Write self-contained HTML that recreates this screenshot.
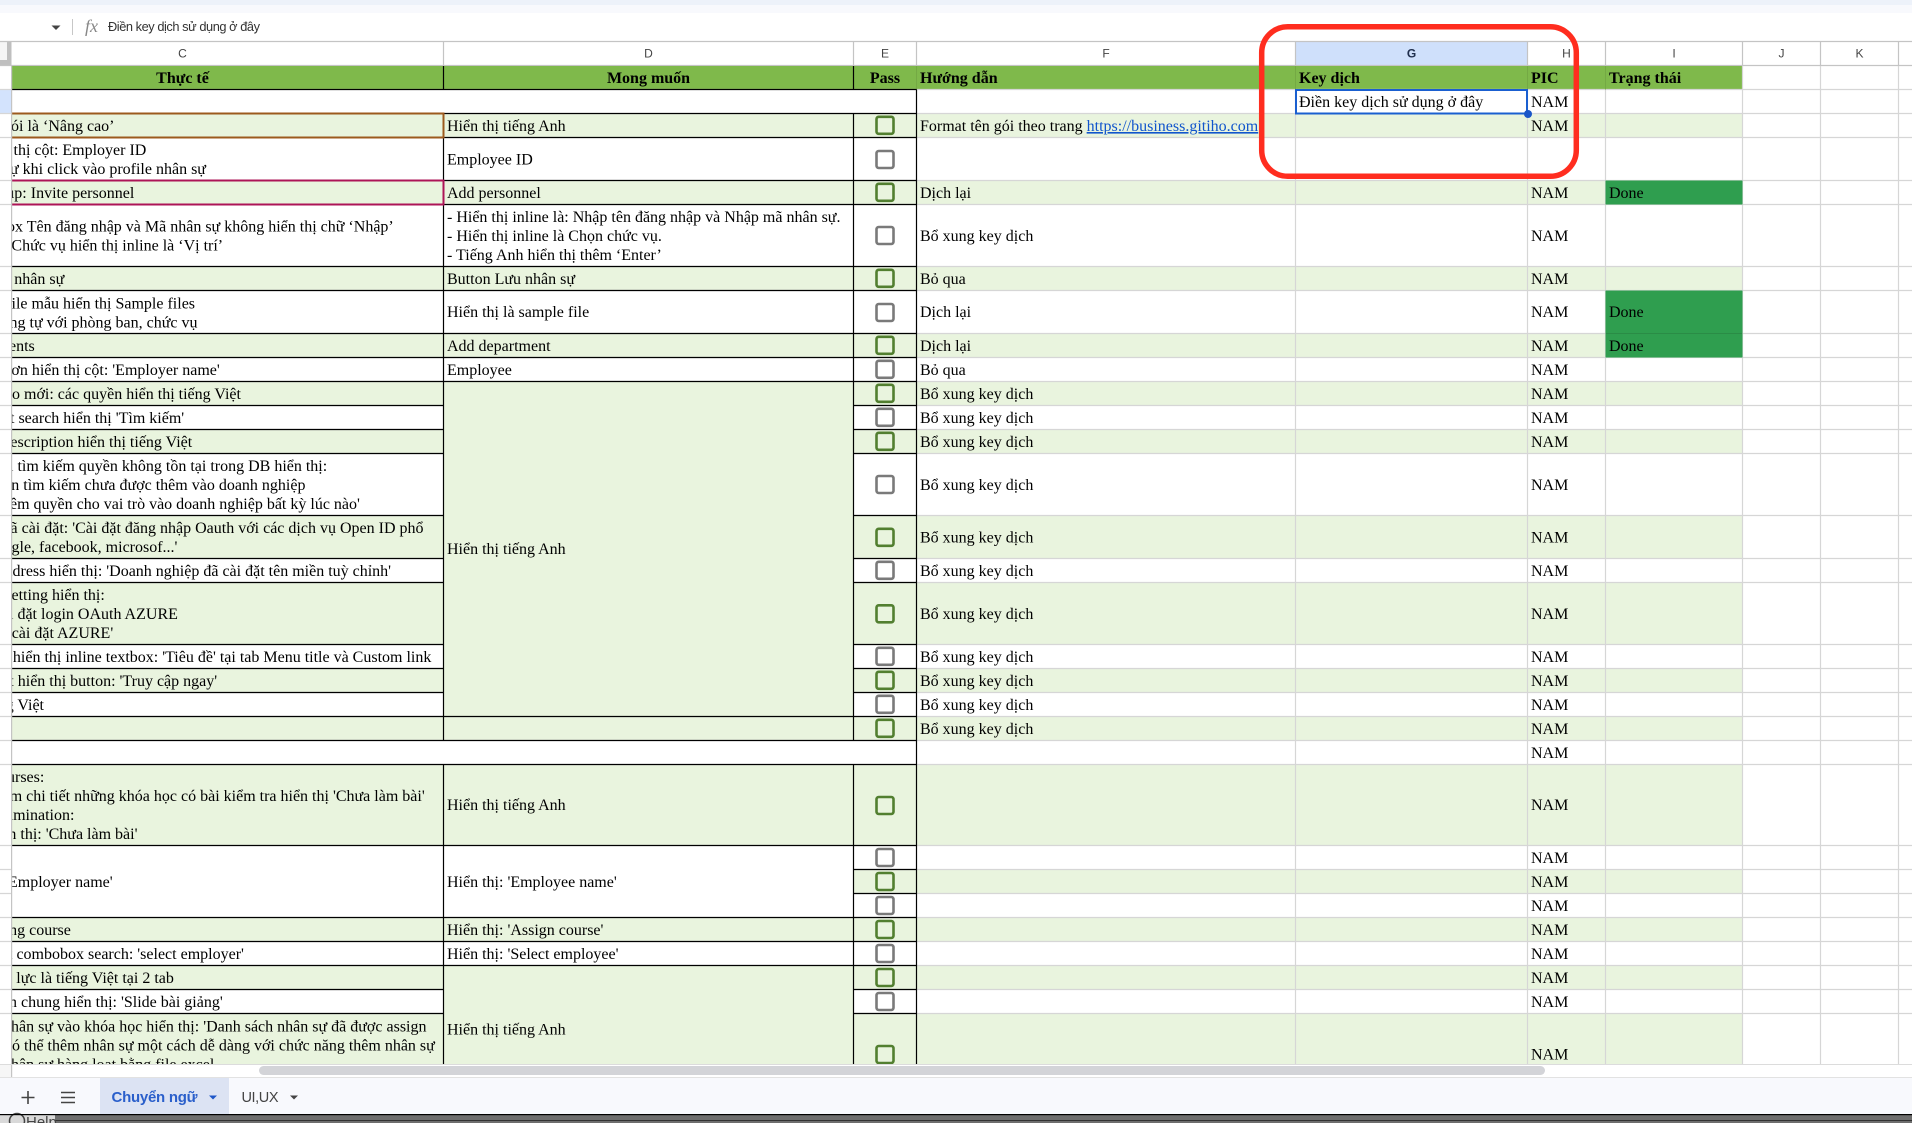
<!DOCTYPE html>
<html lang="vi"><head><meta charset="utf-8"><title>Chuyển ngữ</title>
<style>
html,body{margin:0;padding:0;background:#fff;overflow:hidden}
svg{display:block}
.t text{font-family:"Liberation Serif","DejaVu Serif",serif;font-size:16px;fill:#000}
.b text{font-weight:bold}
.s text,text.s{font-family:"Liberation Sans","DejaVu Sans",sans-serif}
.h text{font-family:"Liberation Sans",sans-serif;font-size:12px;fill:#444;text-anchor:middle}
</style></head><body>
<svg xmlns="http://www.w3.org/2000/svg" width="1912" height="1123" viewBox="0 0 1912 1123">
<defs>
<clipPath id="cC"><rect x="12" y="66" width="431" height="998"/></clipPath>
<clipPath id="cG"><rect x="0" y="66" width="1912" height="998"/></clipPath>
</defs>
<rect width="1912" height="1123" fill="#fff"/>
<rect width="1912" height="5" fill="#edf2fa"/>
<rect y="5" width="1912" height="8" fill="#f8f9fd"/>
<!-- formula bar -->
<path d="M51.5 25.5h9l-4.5 4.5z" fill="#444"/>
<rect x="72" y="19" width="1" height="16" fill="#c7c7c7"/>
<text x="85" y="32" font-family="Liberation Serif,serif" font-style="italic" font-size="18" fill="#888">fx</text>
<text class="s" x="108" y="31" font-size="12.8" fill="#333" textLength="152" lengthAdjust="spacing">Điền key dịch sử dụng ở đây</text>
<!-- column header -->
<rect x="1295.5" y="41.5" width="232" height="24" fill="#cfe0fb"/>
<rect x="0" y="42" width="7" height="18" fill="#f5f5f5"/>
<path d="M7 42h4.5v23H0v-5h7z" fill="#bfbfbf"/>
<path d="M0 41.5H1912M0 65.5H1912M443.5 41.5V65.5M853.5 41.5V65.5M916.5 41.5V65.5M1295.5 41.5V65.5M1527.5 41.5V65.5M1605.5 41.5V65.5M1742.5 41.5V65.5M1820.5 41.5V65.5M1898.5 41.5V65.5" stroke="#c4c4c4" stroke-width="1.2" fill="none"/>
<g class="h">
<text x="182.5" y="57.5">C</text><text x="648.5" y="57.5">D</text><text x="885" y="57.5">E</text><text x="1106" y="57.5">F</text>
<text x="1411.5" y="57.5" font-weight="bold" style="fill:#202f4d">G</text><text x="1566.5" y="57.5">H</text><text x="1674" y="57.5">I</text><text x="1781.5" y="57.5">J</text><text x="1859.5" y="57.5">K</text>
</g>
<!-- left strip highlight -->
<rect x="0" y="90" width="11" height="23.5" fill="#d3e3fd"/>
<!-- bands -->
<g clip-path="url(#cG)">
<rect x="11.5" y="65.5" width="1731" height="24" fill="#7fb94b"/>
<g fill="#e9f4de">
<rect x="11.5" y="113.5" width="1731" height="24"/>
<rect x="11.5" y="180.5" width="1731" height="24"/>
<rect x="11.5" y="266.5" width="1731" height="24"/>
<rect x="11.5" y="333.5" width="1731" height="24"/>
<rect x="11.5" y="381.5" width="1731" height="24"/>
<rect x="11.5" y="429.5" width="1731" height="24"/>
<rect x="11.5" y="515.5" width="1731" height="43"/>
<rect x="11.5" y="582.5" width="1731" height="62"/>
<rect x="11.5" y="668.5" width="1731" height="24"/>
<rect x="11.5" y="716.5" width="1731" height="24"/>
<rect x="11.5" y="764.5" width="1731" height="81"/>
<rect x="853.5" y="869.5" width="889" height="24"/>
<rect x="11.5" y="917.5" width="1731" height="24"/>
<rect x="11.5" y="965.5" width="1731" height="24"/>
<rect x="11.5" y="1013.5" width="1731" height="60"/>
</g>
<!-- light grid -->
<path d="M0 89.5H1912M0 113.5H1912M0 137.5H1912M0 180.5H1912M0 204.5H1912M0 266.5H1912M0 290.5H1912M0 333.5H1912M0 357.5H1912M0 381.5H1912M0 405.5H1912M0 429.5H1912M0 453.5H1912M0 515.5H1912M0 558.5H1912M0 582.5H1912M0 644.5H1912M0 668.5H1912M0 692.5H1912M0 716.5H1912M0 740.5H1912M0 764.5H1912M0 845.5H1912M0 869.5H1912M0 893.5H1912M0 917.5H1912M0 941.5H1912M0 965.5H1912M0 989.5H1912M0 1013.5H1912" stroke="#d6d6d6" stroke-width="1.2" fill="none"/>
<path d="M1295.5 89.5V1064M1527.5 89.5V1064M1605.5 89.5V1064M1742.5 65.5V1064M1820.5 65.5V1064M1898.5 65.5V1064" stroke="#d6d6d6" stroke-width="1.2" fill="none"/>
<path d="M1295.5 65.5V89.5M1527.5 65.5V89.5M1605.5 65.5V89.5" stroke="#74a944" stroke-width="1" fill="none"/>
<path d="M916.5 65.5V89.5" stroke="#74a944" stroke-width="1" fill="none"/>
<!-- merged cells cover the grid -->
<g fill="#e9f4de">
<rect x="443.5" y="381.5" width="410" height="335"/>
<rect x="443.5" y="965.5" width="410" height="110"/>
</g>
<rect x="11.5" y="845.5" width="842" height="72" fill="#fff"/>
<rect x="11.5" y="89.5" width="905" height="24" fill="#fff"/>
<rect x="11.5" y="740.5" width="905" height="24" fill="#fff"/>
<!-- done cells -->
<g fill="#2f9e4f">
<rect x="1605.5" y="180.5" width="137" height="24"/>
<rect x="1605.5" y="290.5" width="137" height="67"/>
</g>
<path d="M1605.5 333.5H1742.5" stroke="#2a8c46" stroke-width="1"/>
<!-- black grid -->
<path d="M11.5 89.5H916.5M11.5 113.5H916.5M11.5 137.5H916.5M11.5 180.5H916.5M11.5 204.5H916.5M11.5 266.5H916.5M11.5 290.5H916.5M11.5 333.5H916.5M11.5 357.5H916.5M11.5 381.5H916.5M11.5 405.5H443.5M853.5 405.5H916.5M11.5 429.5H443.5M853.5 429.5H916.5M11.5 453.5H443.5M853.5 453.5H916.5M11.5 515.5H443.5M853.5 515.5H916.5M11.5 558.5H443.5M853.5 558.5H916.5M11.5 582.5H443.5M853.5 582.5H916.5M11.5 644.5H443.5M853.5 644.5H916.5M11.5 668.5H443.5M853.5 668.5H916.5M11.5 692.5H443.5M853.5 692.5H916.5M11.5 716.5H916.5M11.5 740.5H916.5M11.5 764.5H916.5M11.5 845.5H916.5M853.5 869.5H916.5M853.5 893.5H916.5M11.5 917.5H916.5M11.5 941.5H916.5M11.5 965.5H916.5M11.5 989.5H443.5M853.5 989.5H916.5M11.5 1013.5H443.5M853.5 1013.5H916.5" stroke="#000" stroke-width="1.2" fill="none"/>
<path d="M443.5 65.5V89.5M443.5 113.5V740.5M443.5 764.5V1064M853.5 65.5V89.5M853.5 113.5V740.5M853.5 764.5V1064M916.5 89.5V1064" stroke="#000" stroke-width="1.2" fill="none"/>
<!-- coloured borders -->
<path d="M11.5 113.5H443.5V137.5H11.5" stroke="#9c5a1e" stroke-width="2" fill="none"/>
<path d="M11.5 180.5H443.5V204.5H11.5" stroke="#ad1457" stroke-width="2" fill="none"/>
<!-- checkboxes -->
<g fill="none" stroke-width="2.6">
<g stroke="#527f30">
<rect x="876.5" y="116.8" width="17" height="17" rx="2.2"/>
<rect x="876.5" y="183.8" width="17" height="17" rx="2.2"/>
<rect x="876.5" y="269.8" width="17" height="17" rx="2.2"/>
<rect x="876.5" y="336.8" width="17" height="17" rx="2.2"/>
<rect x="876.5" y="384.8" width="17" height="17" rx="2.2"/>
<rect x="876.5" y="432.8" width="17" height="17" rx="2.2"/>
<rect x="876.5" y="528.8" width="17" height="17" rx="2.2"/>
<rect x="876.5" y="605.3" width="17" height="17" rx="2.2"/>
<rect x="876.5" y="671.8" width="17" height="17" rx="2.2"/>
<rect x="876.5" y="719.8" width="17" height="17" rx="2.2"/>
<rect x="876.5" y="797" width="17" height="17" rx="2.2"/>
<rect x="876.5" y="873" width="17" height="17" rx="2.2"/>
<rect x="876.5" y="921" width="17" height="17" rx="2.2"/>
<rect x="876.5" y="969" width="17" height="17" rx="2.2"/>
<rect x="876.5" y="1046" width="17" height="17" rx="2.2"/>
</g>
<g stroke="#7a7a7a">
<rect x="876.5" y="151" width="17" height="17" rx="2.2"/>
<rect x="876.5" y="227" width="17" height="17" rx="2.2"/>
<rect x="876.5" y="304" width="17" height="17" rx="2.2"/>
<rect x="876.5" y="360.8" width="17" height="17" rx="2.2"/>
<rect x="876.5" y="408.8" width="17" height="17" rx="2.2"/>
<rect x="876.5" y="476" width="17" height="17" rx="2.2"/>
<rect x="876.5" y="561.8" width="17" height="17" rx="2.2"/>
<rect x="876.5" y="647.8" width="17" height="17" rx="2.2"/>
<rect x="876.5" y="695.8" width="17" height="17" rx="2.2"/>
<rect x="876.5" y="849" width="17" height="17" rx="2.2"/>
<rect x="876.5" y="897" width="17" height="17" rx="2.2"/>
<rect x="876.5" y="945" width="17" height="17" rx="2.2"/>
<rect x="876.5" y="993" width="17" height="17" rx="2.2"/>
</g>
</g>
<!-- header text -->
<g class="t b">
<text x="182.5" y="83" text-anchor="middle">Thực tế</text>
<text x="648.5" y="83" text-anchor="middle">Mong muốn</text>
<text x="885" y="83" text-anchor="middle">Pass</text>
<text x="920" y="83">Hướng dẫn</text>
<text x="1299" y="83">Key dịch</text>
<text x="1531" y="83">PIC</text>
<text x="1609" y="83">Trạng thái</text>
</g>
<!-- C column -->
<g class="t" clip-path="url(#cC)">
<text x="11" y="131">ói là ‘Nâng cao’</text>
<text x="13.5" y="155">thị cột: Employer ID</text>
<text x="10" y="174">ự khi click vào profile nhân sự</text>
<text x="6.3" y="198">up: Invite personnel</text>
<text x="7" y="231.5">ox Tên đăng nhập và Mã nhân sự không hiển thị chữ ‘Nhập’</text>
<text x="11.4" y="250.5">Chức vụ hiển thị inline là ‘Vị trí’</text>
<text x="14.3" y="284">nhân sự</text>
<text x="11.5" y="308.5">ile mẫu hiển thị Sample files</text>
<text x="9.5" y="327.5">ng tự với phòng ban, chức vụ</text>
<text x="9" y="351">ents</text>
<text x="11.4" y="375">ơn hiển thị cột: 'Employer name'</text>
<text x="12" y="399">o mới: các quyền hiển thị tiếng Việt</text>
<text x="10" y="423">t search hiển thị 'Tìm kiếm'</text>
<text x="10.4" y="447">escription hiển thị tiếng Việt</text>
<text x="9" y="471">i tìm kiếm quyền không tồn tại trong DB hiển thị:</text>
<text x="4.2" y="490">an tìm kiếm chưa được thêm vào doanh nghiệp</text>
<text x="10" y="509">êm quyền cho vai trò vào doanh nghiệp bất kỳ lúc nào'</text>
<text x="10.5" y="533">ã cài đặt: 'Cài đặt đăng nhập Oauth với các dịch vụ Open ID phổ</text>
<text x="11.5" y="552">gle, facebook, microsof...'</text>
<text x="4.5" y="576">ddress hiển thị: 'Doanh nghiệp đã cài đặt tên miền tuỳ chỉnh'</text>
<text x="11.5" y="600">etting hiển thị:</text>
<text x="9" y="619">i đặt login OAuth AZURE</text>
<text x="11.7" y="638">cài đặt AZURE'</text>
<text x="12.9" y="662">hiển thị inline textbox: 'Tiêu đề' tại tab Menu title và Custom link</text>
<text x="9.3" y="686">t hiển thị button: 'Truy cập ngay'</text>
<text x="5.7" y="710">g Việt</text>
<text x="7" y="782">urses:</text>
<text x="9.7" y="801">m chi tiết những khóa học có bài kiểm tra hiển thị 'Chưa làm bài'</text>
<text x="6" y="820">amination:</text>
<text x="8.4" y="839">n thị: 'Chưa làm bài'</text>
<text x="8" y="887">Employer name'</text>
<text x="9.1" y="935">ng course</text>
<text x="8" y="959">t combobox search: 'select employer'</text>
<text x="5.2" y="983">c lực là tiếng Việt tại 2 tab</text>
<text x="9" y="1007">n chung hiển thị: 'Slide bài giảng'</text>
<text x="11" y="1031.5">hân sự vào khóa học hiển thị: 'Danh sách nhân sự đã được assign</text>
<text x="12" y="1050.5">ó thể thêm nhân sự một cách dễ dàng với chức năng thêm nhân sự</text>
<text x="11" y="1069.5">hân sự hàng loạt bằng file excel</text>
</g>
<!-- D column -->
<g class="t">
<text x="447" y="131">Hiển thị tiếng Anh</text>
<text x="447" y="164.5">Employee ID</text>
<text x="447" y="198">Add personnel</text>
<text x="447" y="222">- Hiển thị inline là: Nhập tên đăng nhập và Nhập mã nhân sự.</text>
<text x="447" y="241">- Hiển thị inline là Chọn chức vụ.</text>
<text x="447" y="260">- Tiếng Anh hiển thị thêm ‘Enter’</text>
<text x="447" y="284">Button Lưu nhân sự</text>
<text x="447" y="317">Hiển thị là sample file</text>
<text x="447" y="351">Add department</text>
<text x="447" y="375">Employee</text>
<text x="447" y="554">Hiển thị tiếng Anh</text>
<text x="447" y="810">Hiển thị tiếng Anh</text>
<text x="447" y="887">Hiển thị: 'Employee name'</text>
<text x="447" y="935">Hiển thị: 'Assign course'</text>
<text x="447" y="959">Hiển thị: 'Select employee'</text>
<text x="447" y="1034.5">Hiển thị tiếng Anh</text>
</g>
<!-- F column -->
<g class="t">
<text x="920" y="131">Format tên gói theo trang <tspan style="fill:#1155cc" text-decoration="underline">https://business.gitiho.com</tspan></text>
<text x="920" y="198">Dịch lại</text>
<text x="920" y="241">Bổ xung key dịch</text>
<text x="920" y="284">Bỏ qua</text>
<text x="920" y="317">Dịch lại</text>
<text x="920" y="351">Dịch lại</text>
<text x="920" y="375">Bỏ qua</text>
<text x="920" y="399">Bổ xung key dịch</text>
<text x="920" y="423">Bổ xung key dịch</text>
<text x="920" y="447">Bổ xung key dịch</text>
<text x="920" y="490">Bổ xung key dịch</text>
<text x="920" y="542.5">Bổ xung key dịch</text>
<text x="920" y="576">Bổ xung key dịch</text>
<text x="920" y="619">Bổ xung key dịch</text>
<text x="920" y="662">Bổ xung key dịch</text>
<text x="920" y="686">Bổ xung key dịch</text>
<text x="920" y="710">Bổ xung key dịch</text>
<text x="920" y="734">Bổ xung key dịch</text>
</g>
<!-- H column -->
<g class="t">
<text x="1531" y="107">NAM</text><text x="1531" y="131">NAM</text><text x="1531" y="198">NAM</text><text x="1531" y="241">NAM</text><text x="1531" y="284">NAM</text><text x="1531" y="317">NAM</text><text x="1531" y="351">NAM</text><text x="1531" y="375">NAM</text><text x="1531" y="399">NAM</text><text x="1531" y="423">NAM</text><text x="1531" y="447">NAM</text><text x="1531" y="490">NAM</text><text x="1531" y="542.5">NAM</text><text x="1531" y="576">NAM</text><text x="1531" y="619">NAM</text><text x="1531" y="662">NAM</text><text x="1531" y="686">NAM</text><text x="1531" y="710">NAM</text><text x="1531" y="734">NAM</text><text x="1531" y="758">NAM</text><text x="1531" y="810">NAM</text><text x="1531" y="863">NAM</text><text x="1531" y="887">NAM</text><text x="1531" y="911">NAM</text><text x="1531" y="935">NAM</text><text x="1531" y="959">NAM</text><text x="1531" y="983">NAM</text><text x="1531" y="1007">NAM</text><text x="1531" y="1059.5">NAM</text>
<text x="1609" y="198">Done</text><text x="1609" y="317">Done</text><text x="1609" y="351">Done</text>
<text x="1299" y="107">Điền key dịch sử dụng ở đây</text>
</g>
<!-- selected cell -->
<rect x="1296" y="90" width="231" height="23.5" fill="none" stroke="#1a5fd0" stroke-width="2"/>
<circle cx="1528" cy="114" r="4" fill="#1a56c8"/>
</g>
<!-- left frozen line -->
<rect x="11" y="65" width="1.2" height="1012" fill="#c4c4c4"/>
<!-- scrollbar -->
<rect x="0" y="1064" width="11" height="13" fill="#f6f6f6"/>
<rect x="0" y="1064" width="1912" height="1" fill="#dcdcdc"/>
<rect x="259" y="1066" width="1286" height="9" rx="4.5" fill="#d3d4d8"/>
<rect x="0" y="1077" width="1912" height="1" fill="#e2e2e2"/>
<!-- tab bar -->
<rect x="0" y="1078" width="1912" height="36" fill="#f8f9fd"/>
<path d="M28 1091v13M21.5 1097.5h13" stroke="#444" stroke-width="1.6" fill="none"/>
<path d="M61 1092.5h14M61 1097.5h14M61 1102.5h14" stroke="#444" stroke-width="1.5" fill="none"/>
<rect x="100" y="1078" width="129" height="36" fill="#dce3f3"/>
<text class="s" x="111.5" y="1102" font-size="15" font-weight="bold" fill="#2a5fcb" textLength="86" lengthAdjust="spacing">Chuyển ngữ</text>
<path d="M209 1095.5h8l-4 4z" fill="#1f57c8"/>
<text class="s" x="241.5" y="1102" font-size="14.5" fill="#444" textLength="37" lengthAdjust="spacing">UI,UX</text>
<path d="M290 1095.5h8l-4 4z" fill="#444"/>
<!-- bottom strip -->
<rect x="0" y="1114" width="1912" height="9" fill="#6e6e6e"/>
<rect x="0" y="1115" width="55" height="8" fill="#d9d9d9"/>
<rect x="55" y="1120" width="1857" height="1" fill="#333"/>
<circle cx="17" cy="1121" r="7.5" fill="none" stroke="#444" stroke-width="1.5"/>
<text class="s" x="26" y="1127" font-size="15" fill="#444">Help</text>
<rect x="0" y="1114" width="1912" height="1.2" fill="#000"/>
<!-- red annotation -->
<rect x="1261.7" y="26.7" width="314.6" height="149.6" rx="26" fill="none" stroke="#ff2d1f" stroke-width="5.5"/>
</svg>
</body></html>
